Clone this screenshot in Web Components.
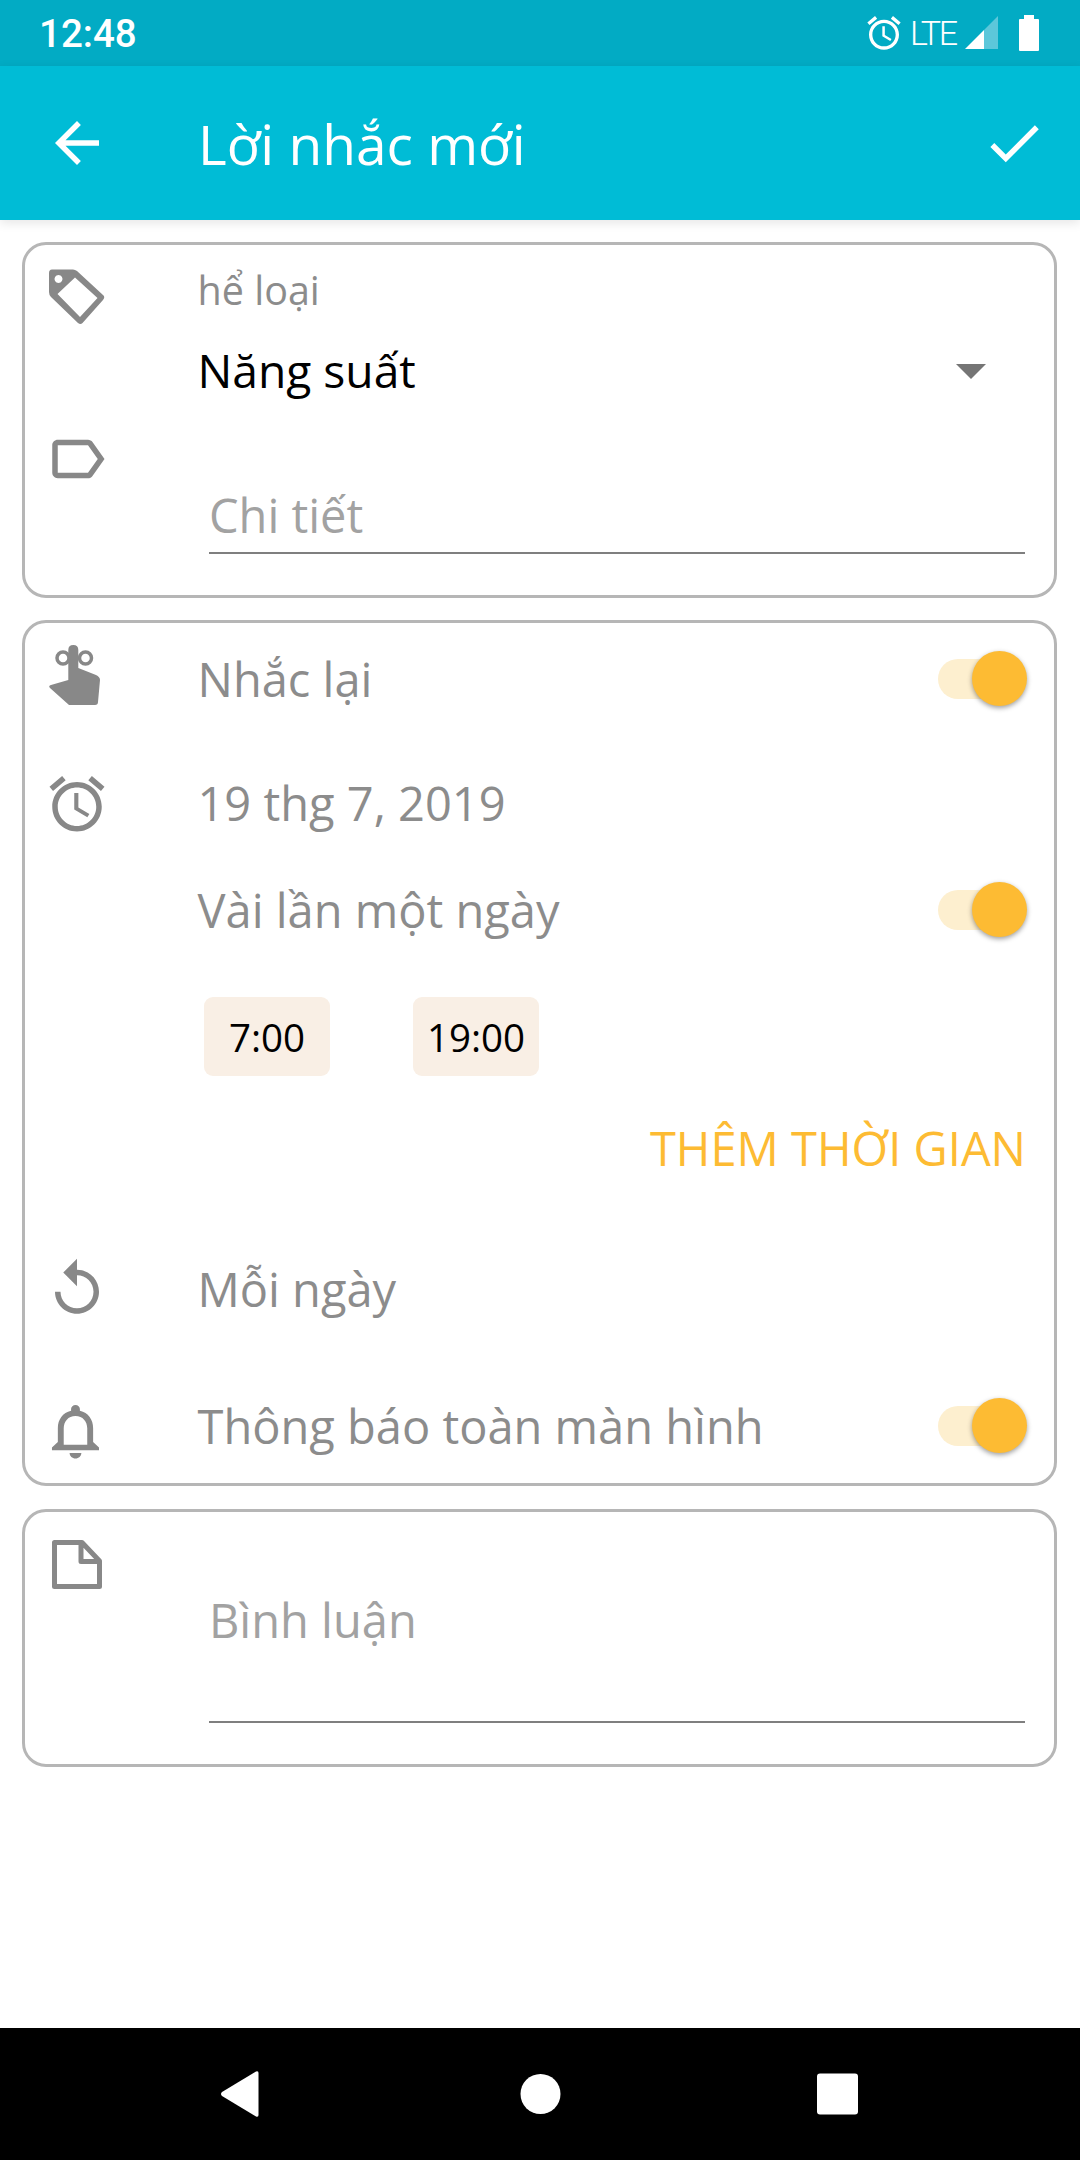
<!DOCTYPE html>
<html lang="vi">
<head>
<meta charset="utf-8">
<title>Lời nhắc mới</title>
<style>
    html, body {
        margin: 0;
        padding: 0;
        background: #fff;
    }

    body {
        width: 1080px;
        height: 2160px;
        display: flex;
        flex-direction: column;
        font-family: 'Open Sans', sans-serif;
        color: #8c8c8c;
        overflow: hidden;
    }

    main {
        flex: 1;
        display: flex;
        flex-direction: column;
        gap: 22px;
        padding: 22px 23px 0 22px;
    }
</style>
</head>
<body>
    <status-bar></status-bar>
    <app-bar>Lời nhắc mới</app-bar>

    <main>
        <form-card>
            <form-row align="start" style="height: 179px">
                <app-icon slot="icon" name="tag" style="margin-top: 19px"></app-icon>
                <select-field label="hể loại">Năng suất</select-field>
            </form-row>
            <form-row align="start" style="height: 171px">
                <app-icon slot="icon" name="label" style="margin-top: 2px"></app-icon>
                <text-field style="margin-top: 59px; --pad: 5px">Chi tiết</text-field>
            </form-row>
        </form-card>

        <form-card>
            <form-row style="height: 112px">
                <app-icon slot="icon" name="finger" style="margin-top: 19px"></app-icon>
                Nhắc lại
                <toggle-switch slot="end"></toggle-switch>
            </form-row>
            <form-row style="height: 132px; padding-top: 2px">
                <app-icon slot="icon" name="alarm" style="margin-top: 34px"></app-icon>
                19 thg 7, 2019
            </form-row>
            <form-row style="height: 82px">
                Vài lần một ngày
                <toggle-switch slot="end"></toggle-switch>
            </form-row>
            <time-list>
                <time-chip>7:00</time-chip>
                <time-chip>19:00</time-chip>
            </time-list>
            <add-time>THÊM THỜI GIAN</add-time>
            <form-row style="height: 142px">
                <app-icon slot="icon" name="replay" style="margin-top: 38px"></app-icon>
                Mỗi ngày
            </form-row>
            <form-row style="height: 112px; margin-top: 8px; padding-top: 2px; padding-bottom: 1px">
                <app-icon slot="icon" name="bell" style="margin-top: 28px"></app-icon>
                Thông báo toàn màn hình
                <toggle-switch slot="end"></toggle-switch>
            </form-row>
        </form-card>

        <form-card style="margin-top: 1px">
            <form-row align="start" style="height: 252px">
                <app-icon slot="icon" name="note" style="margin-top: 20px"></app-icon>
                <text-field style="margin-top: 76px; --pad: 69px">Bình luận</text-field>
            </form-row>
        </form-card>
    </main>

    <nav-bar></nav-bar>

<script>
    const ICONS = {
        back: '<path transform="scale(2.75)" d="M20 11H7.83l5.59-5.59L12 4l-8 8 8 8 1.41-1.41L7.83 13H20v-2z"/>',
        check: '<path transform="scale(2.75)" d="M9 16.17L4.83 12l-1.42 1.41L9 19 21 7l-1.41-1.41z"/>',
        tag: '<path fill-rule="evenodd" d="M8 5.500H29Q31 5.500 33 7L59 31Q61.500 33 59 36L38.500 59Q36.500 61 34 59L7 33Q5 31 5 28V9Q5 5.500 8 5.500ZM31 13.500 13.500 30 36 53 53.500 34ZM14.500 11a4 4 0 1 0 .01 0Z"/>',
        label: '<path transform="scale(2.75)" d="M17.63 5.84C17.27 5.33 16.67 5 16 5L5 5.01C3.9 5.01 3 5.9 3 7v10c0 1.1.9 1.99 2 1.99L16 19c.67 0 1.27-.33 1.63-.84L22 12l-4.37-6.16zM16 17H5V7h11l3.55 5L16 17z"/>',
        finger: '<circle cx="19" cy="16" r="6" fill="none" stroke="currentColor" stroke-width="3.500"/><circle cx="41.500" cy="16" r="6" fill="none" stroke="currentColor" stroke-width="3.500"/><path d="M29.300 3Q34.300 3 34.300 8V26L52 33Q56 35 56 38L54 60Q54 63 51 63H25L6 46Q4 44 7 43L24.300 38V8Q24.300 3 29.300 3Z"/>',
        alarm: '<path transform="scale(2.75)" d="M22 5.72l-4.6-3.86-1.29 1.53 4.6 3.86L22 5.72zM7.88 3.39L6.6 1.86 2 5.71l1.29 1.53 4.59-3.85zM12.5 8H11v6l4.75 2.85.75-1.23-4-2.37V8zM12 4c-4.97 0-9 4.03-9 9s4.02 9 9 9c4.97 0 9-4.03 9-9s-4.03-9-9-9zm0 16c-3.87 0-7-3.13-7-7s3.13-7 7-7 7 3.13 7 7-3.13 7-7 7z"/>',
        replay: '<path transform="scale(2.75)" d="M12 5V1L7 6l5 5V7c3.31 0 6 2.69 6 6s-2.69 6-6 6-6-2.69-6-6H4c0 4.42 3.58 8 8 8s8-3.58 8-8-3.58-8-8-8z"/>',
        bell: '<path transform="translate(-3.800 0) scale(2.940 2.750)" d="M12 22c1.1 0 2-.9 2-2h-4c0 1.1.9 2 2 2zm6-6v-5c0-3.07-1.63-5.64-4.5-6.32V4c0-.83-.67-1.5-1.5-1.5s-1.5.67-1.5 1.5v.68C7.64 5.36 6 7.92 6 11v5l-2 2v1h16v-1l-2-2zm-2 1H8v-6c0-2.48 1.51-4.5 4-4.5s4 2.02 4 4.5v6z"/>',
        note: '<path fill="none" stroke="currentColor" stroke-width="5" stroke-linejoin="round" d="M10.500 10.500H38L55.500 29V54.500H10.500ZM37 10.500V29.500H55.500"/>'
    };

    class AppIcon extends HTMLElement {
        constructor() {
            super();
            this.attachShadow({ mode: 'open' });
        }

        connectedCallback() {
            const name = this.getAttribute('name');
            this.shadowRoot.innerHTML = `
                <style>
                    :host { display: block; width: 66px; height: 66px; color: #888; flex: none; }
                    svg { display: block; overflow: visible; fill: currentColor; }
                </style>
                <svg width="66" height="66" viewBox="0 0 66 66">${ICONS[name]}</svg>`;
        }
    }

    const statusTemplate = document.createElement('template');
    statusTemplate.innerHTML = `
    <style>
        :host {
            display: flex;
            align-items: center;
            flex: none;
            height: 66px;
            padding: 0 41px 0 39px;
            background: #02abc4;
            color: #fff;
        }
        .time { font: 500 38.5px Roboto, sans-serif; flex: 1; }
        .alarm { width: 40px; height: 40px; margin-right: 6px; }
        .lte { font: 300 34px Roboto, sans-serif; letter-spacing: -2.5px; width: 55px; }
        .signal { margin-right: 21px; }
        svg { display: block; fill: #fff; }
    </style>
    <span class="time">12:48</span>
    <svg class="alarm" viewBox="0 0 24 24"><path d="M22 5.72l-4.6-3.86-1.29 1.53 4.6 3.86L22 5.72zM7.88 3.39L6.6 1.86 2 5.71l1.29 1.53 4.59-3.85zM12.5 8H11v6l4.75 2.85.75-1.23-4-2.37V8zM12 4c-4.97 0-9 4.03-9 9s4.02 9 9 9c4.97 0 9-4.03 9-9s-4.03-9-9-9zm0 16c-3.87 0-7-3.13-7-7s3.13-7 7-7 7 3.13 7 7-3.13 7-7 7z"/></svg>
    <span class="lte">LTE</span>
    <svg class="signal" width="33" height="34" viewBox="0 0 33 34"><path fill="#5cc7da" d="M19 14 33 0V33H19Z"/><path d="M0 33 19 14V33Z"/></svg>
    <svg width="20" height="36" viewBox="0 0 20 36"><path d="M5 0H15V4H19Q20 4 20 5V35Q20 36 19 36H1Q0 36 0 35V5Q0 4 1 4H5Z"/></svg>
    `;

    class StatusBar extends HTMLElement {
        constructor() {
            super();
            this.attachShadow({ mode: 'open' });
            this.shadowRoot.appendChild(statusTemplate.content.cloneNode(true));
        }
    }

    const appBarTemplate = document.createElement('template');
    appBarTemplate.innerHTML = `
    <style>
        :host {
            display: flex;
            align-items: center;
            flex: none;
            position: relative;
            height: 154px;
            padding: 0 33px 0 44px;
            background: #00bcd6;
            color: #fff;
            box-shadow: 0 3px 10px rgba(0, 0, 0, .1);
        }
        .title {
            flex: 1;
            margin-left: 88px;
            font: 400 55px 'Open Sans', sans-serif;
        }
        app-icon { color: #fff; }
    </style>
    <app-icon name="back"></app-icon>
    <div class="title"><slot></slot></div>
    <app-icon name="check"></app-icon>
    `;

    class AppBar extends HTMLElement {
        constructor() {
            super();
            this.attachShadow({ mode: 'open' });
            this.shadowRoot.appendChild(appBarTemplate.content.cloneNode(true));
        }
    }

    const cardTemplate = document.createElement('template');
    cardTemplate.innerHTML = `
    <style>
        :host {
            display: block;
            border: 3px solid #b6b6b6;
            border-radius: 24px;
            background: #fff;
        }
    </style>
    <slot></slot>
    `;

    class FormCard extends HTMLElement {
        constructor() {
            super();
            this.attachShadow({ mode: 'open' });
            this.shadowRoot.appendChild(cardTemplate.content.cloneNode(true));
        }
    }

    const rowTemplate = document.createElement('template');
    rowTemplate.innerHTML = `
    <style>
        :host {
            display: flex;
            align-items: center;
            padding-left: 19px;
            font-size: 47px;
            line-height: 64px;
        }
        :host([align="start"]) { align-items: flex-start; }
        .icon { align-self: flex-start; width: 66px; margin-right: 87.5px; flex: none; }
        .content { flex: 1; min-width: 0; white-space: nowrap; }
        .end { flex: none; margin-right: 27px; }
    </style>
    <div class="icon"><slot name="icon"></slot></div>
    <div class="content"><slot></slot></div>
    <div class="end"><slot name="end"></slot></div>
    `;

    class FormRow extends HTMLElement {
        constructor() {
            super();
            this.attachShadow({ mode: 'open' });
            this.shadowRoot.appendChild(rowTemplate.content.cloneNode(true));
        }
    }

    const selectTemplate = document.createElement('template');
    selectTemplate.innerHTML = `
    <style>
        :host { display: block; padding-top: 19px; }
        .label { height: 52px; font-size: 39.5px; line-height: 52px; color: #8c8c8c; }
        .value {
            display: flex;
            align-items: center;
            justify-content: space-between;
            height: 106px;
            margin-top: 2px;
            padding-right: 41.5px;
            font-size: 46.2px;
            color: #000;
        }
        .arrow {
            width: 0;
            height: 0;
            border-left: 15px solid transparent;
            border-right: 15px solid transparent;
            border-top: 15px solid #757575;
        }
    </style>
    <div class="label"></div>
    <div class="value"><span><slot></slot></span><span class="arrow"></span></div>
    `;

    class SelectField extends HTMLElement {
        constructor() {
            super();
            this.attachShadow({ mode: 'open' });
            this.shadowRoot.appendChild(selectTemplate.content.cloneNode(true));
        }

        connectedCallback() {
            this.shadowRoot.querySelector('.label').textContent = this.getAttribute('label');
        }
    }

    const fieldTemplate = document.createElement('template');
    fieldTemplate.innerHTML = `
    <style>
        :host {
            display: block;
            margin: 0 2px 0 11.5px;
            padding-bottom: var(--pad);
            border-bottom: 2px solid #7f7f7f;
            font-size: 47px;
            line-height: 64px;
            color: #a2a2a2;
        }
    </style>
    <slot></slot>
    `;

    class TextField extends HTMLElement {
        constructor() {
            super();
            this.attachShadow({ mode: 'open' });
            this.shadowRoot.appendChild(fieldTemplate.content.cloneNode(true));
        }
    }

    const toggleTemplate = document.createElement('template');
    toggleTemplate.innerHTML = `
    <style>
        :host { display: block; position: relative; width: 89px; height: 56px; }
        .track {
            position: absolute;
            left: 0;
            right: 12px;
            top: 8px;
            height: 40px;
            border-radius: 20px;
            background: #fdefcf;
        }
        .thumb {
            position: absolute;
            right: 0;
            top: 0;
            width: 55px;
            height: 55px;
            border-radius: 50%;
            background: #fdbb33;
            box-shadow: 0 2px 5px rgba(0, 0, 0, .38);
        }
    </style>
    <div class="track"></div>
    <div class="thumb"></div>
    `;

    class ToggleSwitch extends HTMLElement {
        constructor() {
            super();
            this.attachShadow({ mode: 'open' });
            this.shadowRoot.appendChild(toggleTemplate.content.cloneNode(true));
        }
    }

    const listTemplate = document.createElement('template');
    listTemplate.innerHTML = `
    <style>
        :host { display: flex; gap: 83px; padding: 46px 0 0 179px; }
    </style>
    <slot></slot>
    `;

    class TimeList extends HTMLElement {
        constructor() {
            super();
            this.attachShadow({ mode: 'open' });
            this.shadowRoot.appendChild(listTemplate.content.cloneNode(true));
        }
    }

    const chipTemplate = document.createElement('template');
    chipTemplate.innerHTML = `
    <style>
        :host {
            display: flex;
            align-items: center;
            justify-content: center;
            width: 126px;
            height: 79px;
            border-radius: 9px;
            background: #f9efe5;
            color: #000;
            font-size: 38.5px;
        }
    </style>
    <slot></slot>
    `;

    class TimeChip extends HTMLElement {
        constructor() {
            super();
            this.attachShadow({ mode: 'open' });
            this.shadowRoot.appendChild(chipTemplate.content.cloneNode(true));
        }
    }

    const addTemplate = document.createElement('template');
    addTemplate.innerHTML = `
    <style>
        :host {
            display: block;
            height: 142px;
            padding-right: 28px;
            color: #fdbb33;
            font-size: 47px;
            line-height: 144px;
            text-align: right;
        }
    </style>
    <slot></slot>
    `;

    class AddTime extends HTMLElement {
        constructor() {
            super();
            this.attachShadow({ mode: 'open' });
            this.shadowRoot.appendChild(addTemplate.content.cloneNode(true));
        }
    }

    const navTemplate = document.createElement('template');
    navTemplate.innerHTML = `
    <style>
        :host {
            display: flex;
            align-items: center;
            gap: 240px;
            flex: none;
            height: 132px;
            padding-left: 210px;
            background: #000;
        }
        svg { display: block; fill: #fff; }
    </style>
    <svg width="60" height="60" viewBox="0 0 60 60"><path d="M46 7.500Q48.500 6.500 48.500 9V51Q48.500 53.500 46 52.500L12 32Q10 30 12 28Z"/></svg>
    <svg width="60" height="60" viewBox="0 0 60 60"><circle cx="30.500" cy="30" r="20"/></svg>
    <svg width="60" height="60" viewBox="0 0 60 60"><rect x="7" y="9.500" width="41" height="41" rx="3"/></svg>
    `;

    class NavBar extends HTMLElement {
        constructor() {
            super();
            this.attachShadow({ mode: 'open' });
            this.shadowRoot.appendChild(navTemplate.content.cloneNode(true));
        }
    }

    customElements.define('app-icon', AppIcon);
    customElements.define('status-bar', StatusBar);
    customElements.define('app-bar', AppBar);
    customElements.define('form-card', FormCard);
    customElements.define('form-row', FormRow);
    customElements.define('select-field', SelectField);
    customElements.define('text-field', TextField);
    customElements.define('toggle-switch', ToggleSwitch);
    customElements.define('time-list', TimeList);
    customElements.define('time-chip', TimeChip);
    customElements.define('add-time', AddTime);
    customElements.define('nav-bar', NavBar);
</script>
</body>
</html>
